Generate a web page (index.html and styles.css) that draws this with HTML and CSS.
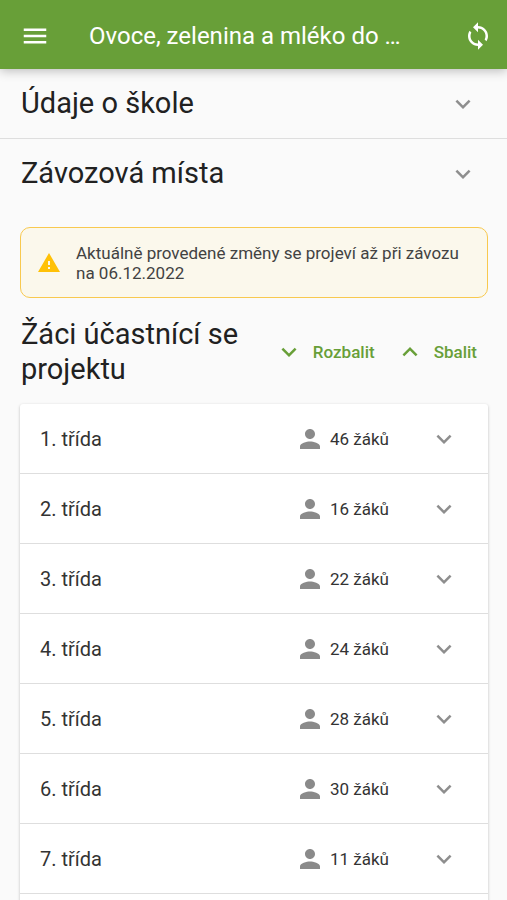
FILE: index.html
```html
<!DOCTYPE html>
<html lang="cs">
<head>
<meta charset="utf-8">
<meta name="viewport" content="width=device-width, initial-scale=1">
<title>Ovoce, zelenina a mléko do …</title>
<link rel="stylesheet" href="styles.css">
</head>
<body>
<svg class="sprite" aria-hidden="true">
  <symbol id="menu" viewBox="0 0 24 24"><path d="M3 18h18v-2H3v2zm0-5h18v-2H3v2zm0-7v2h18V6H3z"/></symbol>
  <symbol id="sync" viewBox="0 0 24 24"><path d="M12 4V1L8 5l4 4V6c3.31 0 6 2.69 6 6 0 1.01-.25 1.97-.7 2.8l1.46 1.46C19.54 15.03 20 13.57 20 12c0-4.42-3.58-8-8-8zm0 14c-3.31 0-6-2.69-6-6 0-1.01.25-1.97.7-2.8L5.24 7.74C4.46 8.97 4 10.43 4 12c0 4.42 3.58 8 8 8v3l4-4-4-4v3z"/></symbol>
  <symbol id="down" viewBox="0 0 24 24"><path d="M16.59 8.59L12 13.17 7.41 8.59 6 10l6 6 6-6z"/></symbol>
  <symbol id="up" viewBox="0 0 24 24"><path d="M12 8l-6 6 1.41 1.41L12 10.83l4.59 4.58L18 14z"/></symbol>
  <symbol id="warning" viewBox="0 0 24 24"><path d="M1 21h22L12 2 1 21zm12-3h-2v-2h2v2zm0-4h-2v-4h2v4z"/></symbol>
  <symbol id="person" viewBox="0 0 24 24"><path d="M12 12c2.210 0 4-1.790 4-4s-1.790-4-4-4-4 1.790-4 4 1.790 4 4 4zm0 2c-2.670 0-8 1.340-8 4v2h16v-2c0-2.660-5.330-4-8-4z"/></symbol>
</svg>

<header class="toolbar">
  <button class="icon-button" type="button" aria-label="Menu"><svg class="icon"><use href="#menu"/></svg></button>
  <h1 class="toolbar-title">Ovoce, zelenina a mléko do …</h1>
  <button class="icon-button" type="button" aria-label="Synchronizovat"><svg class="icon"><use href="#sync"/></svg></button>
</header>

<main>
  <h2 class="section"><button class="section-toggle" type="button">Údaje o škole<svg class="icon chevron"><use href="#down"/></svg></button></h2>
  <h2 class="section"><button class="section-toggle" type="button">Závozová místa<svg class="icon chevron"><use href="#down"/></svg></button></h2>

  <p class="notice" role="status">
    <svg class="icon notice-icon"><use href="#warning"/></svg>
    <span>Aktuálně provedené změny se projeví až při závozu na 06.12.2022</span>
  </p>

  <div class="list-head">
    <h2 class="list-title">Žáci účastnící se projektu</h2>
    <div class="actions">
      <button class="text-button" type="button"><svg class="icon"><use href="#down"/></svg>Rozbalit</button>
      <button class="text-button" type="button"><svg class="icon"><use href="#up"/></svg>Sbalit</button>
    </div>
  </div>

  <ul class="classes">
    <li><button class="class-row" type="button"><span class="class-name">1. třída</span><svg class="icon person"><use href="#person"/></svg><span class="count">46 žáků</span><svg class="icon chevron"><use href="#down"/></svg></button></li>
    <li><button class="class-row" type="button"><span class="class-name">2. třída</span><svg class="icon person"><use href="#person"/></svg><span class="count">16 žáků</span><svg class="icon chevron"><use href="#down"/></svg></button></li>
    <li><button class="class-row" type="button"><span class="class-name">3. třída</span><svg class="icon person"><use href="#person"/></svg><span class="count">22 žáků</span><svg class="icon chevron"><use href="#down"/></svg></button></li>
    <li><button class="class-row" type="button"><span class="class-name">4. třída</span><svg class="icon person"><use href="#person"/></svg><span class="count">24 žáků</span><svg class="icon chevron"><use href="#down"/></svg></button></li>
    <li><button class="class-row" type="button"><span class="class-name">5. třída</span><svg class="icon person"><use href="#person"/></svg><span class="count">28 žáků</span><svg class="icon chevron"><use href="#down"/></svg></button></li>
    <li><button class="class-row" type="button"><span class="class-name">6. třída</span><svg class="icon person"><use href="#person"/></svg><span class="count">30 žáků</span><svg class="icon chevron"><use href="#down"/></svg></button></li>
    <li><button class="class-row" type="button"><span class="class-name">7. třída</span><svg class="icon person"><use href="#person"/></svg><span class="count">11 žáků</span><svg class="icon chevron"><use href="#down"/></svg></button></li>
  </ul>
</main>
</body>
</html>
```
FILE: styles.css
```css
* {
  box-sizing: border-box;
}

html {
  scrollbar-width: none;
}

body {
  margin: 0;
  background: #fafafa;
  color: #212121;
  font-family: Roboto, "Noto Sans", sans-serif;
}

h1, h2, p, ul {
  margin: 0;
  padding: 0;
  font-weight: 400;
}

button {
  margin: 0;
  padding: 0;
  border: 0;
  background: none;
  color: inherit;
  font: inherit;
  text-align: left;
  cursor: pointer;
}

.sprite {
  display: none;
}

.icon {
  flex: none;
  width: 30px;
  height: 30px;
  fill: currentColor;
}

.chevron {
  color: #8e8e8e;
}

.toolbar {
  position: relative;
  display: flex;
  align-items: center;
  padding: 21px 14px 18px 20px;
  background: #689f38;
  color: #fff;
  box-shadow: 0 2px 10px rgba(0, 0, 0, 0.25);
}

.icon-button {
  display: flex;
}

.toolbar-title {
  flex: 1;
  margin-left: 39px;
  font-size: 24px;
  line-height: 30px;
  white-space: nowrap;
}

.section + .section {
  border-top: 1px solid #dedede;
}

.section-toggle {
  display: flex;
  align-items: center;
  justify-content: space-between;
  width: 100%;
  padding: 17px 29px 17px 21px;
  font-size: 29px;
  line-height: 35px;
}

.notice {
  display: flex;
  align-items: center;
  gap: 15px;
  margin: 19px 19px 0 20px;
  padding: 15px 16px 14px;
  border: 1px solid #f8c94f;
  border-radius: 10px;
  background: #fbf8ec;
  color: #424242;
  font-size: 17px;
  line-height: 20px;
}

.notice-icon {
  width: 24px;
  height: 24px;
  color: #ffc107;
}

.list-head {
  display: flex;
  align-items: center;
  justify-content: space-between;
  padding: 19px 30px 17px 21px;
}

.list-title {
  flex: 1;
  font-size: 29px;
  line-height: 35px;
}

.actions {
  display: flex;
  gap: 20px;
}

.text-button {
  display: flex;
  align-items: center;
  gap: 9px;
  color: #689f38;
  font-size: 17px;
  font-weight: 500;
  line-height: 30px;
}

.classes {
  margin: 0 19px 0 20px;
  padding-bottom: 30px;
  background: #fff;
  border-radius: 3px;
  box-shadow: 0 1px 3px rgba(0, 0, 0, 0.25);
  list-style: none;
}

.classes li {
  border-bottom: 1px solid #dedede;
}

.class-row {
  display: flex;
  align-items: center;
  width: 100%;
  padding: 20px 29px 19px 20px;
  color: #333;
  font-size: 20px;
  line-height: 30px;
}

.class-name {
  flex: 1;
}

.person {
  margin-right: 5px;
  color: #8a8a8a;
}

.count {
  width: 99px;
  font-size: 17px;
}
```
